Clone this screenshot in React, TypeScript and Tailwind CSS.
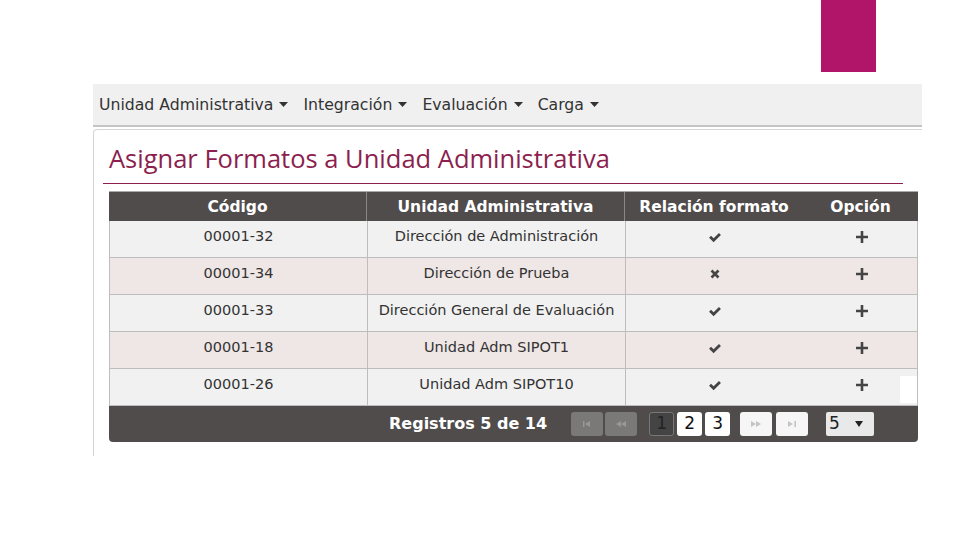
import React from 'react';

type Row = { code: string; unit: string; ok: boolean };

const rows: Row[] = [
  { code: '00001-32', unit: 'Dirección de Administración', ok: true },
  { code: '00001-34', unit: 'Dirección de Prueba', ok: false },
  { code: '00001-33', unit: 'Dirección General de Evaluación', ok: true },
  { code: '00001-18', unit: 'Unidad Adm SIPOT1', ok: true },
  { code: '00001-26', unit: 'Unidad Adm SIPOT10', ok: true },
];

const verdana = { fontFamily: '"DejaVu Sans", Verdana, sans-serif' };

function Caret() {
  return (
    <svg width="9" height="6" viewBox="0 0 9 6" className="ml-[6px] mt-[1px]">
      <path d="M0 0h9L4.5 5z" fill="#333" />
    </svg>
  );
}

function CheckIcon() {
  return (
    <svg width="14" height="11" viewBox="0 0 13 10">
      <path d="M1 5.2l1.8-1.8 2.4 2.4L10.2 0.8 12 2.6 5.2 9.4z" fill="#444" />
    </svg>
  );
}

function TimesIcon() {
  return (
    <svg width="10" height="10" viewBox="0 0 10 10">
      <path d="M1.5 1.5l7 7M8.5 1.5l-7 7" stroke="#444" strokeWidth="2.6" strokeLinecap="butt" />
    </svg>
  );
}

function PlusIcon() {
  return (
    <svg width="12" height="12" viewBox="0 0 12 12">
      <path d="M4.7 0h2.6v4.7H12v2.6H7.3V12H4.7V7.3H0V4.7h4.7z" fill="#444" />
    </svg>
  );
}

function NavGlyph({ kind, color }: { kind: 'first' | 'prev' | 'next' | 'last'; color: string }) {
  const d = {
    first: 'M1 1v6h1.4V1zM8 1L3 4l5 3z',
    prev: 'M5 1L0 4l5 3zM10 1L5 4l5 3z',
    next: 'M0 1l5 3-5 3zM5 1l5 3-5 3z',
    last: 'M1 1l5 3-5 3zM7.4 1v6H9V1z',
  }[kind];
  return (
    <svg width="10" height="8" viewBox="0 0 10 8">
      <path d={d} fill={color} />
    </svg>
  );
}

export default function App() {
  return (
    <div className="w-[960px] h-[540px] bg-white overflow-hidden relative" style={verdana}>
      {/* accent block */}
      <div className="ml-[821px] w-[55px] h-[72px] bg-[#b0156a]" />

      {/* menu bar */}
      <nav className="ml-[93px] mt-[12px] w-[829px] h-[43px] bg-[#f0f0f0] border-b-2 border-[#c4c4c4] flex items-center pl-[6px] gap-[15px] text-[15.7px] text-[#333]">
        {['Unidad Administrativa', 'Integración', 'Evaluación', 'Carga'].map((m) => (
          <div key={m} className="flex items-center">
            <span>{m}</span>
            <Caret />
          </div>
        ))}
      </nav>

      {/* content panel */}
      <div className="ml-[93px] mt-[2px] w-[829px] h-[327px] border-l border-t border-[#d4d4d4] rounded-tl-[4px]">
        <h1
          className="pl-[15px] pt-[11px] text-[25.5px] leading-[34px] text-[#8c1f4f]"
          style={{ fontFamily: '"Open Sans", "Noto Sans", sans-serif' }}
        >
          Asignar Formatos a Unidad Administrativa
        </h1>
        <div className="ml-[9px] mt-[8px] w-[800px] h-px bg-[#8c1f4f]" />

        <div className="ml-[15px] mt-[7px] w-[809px] rounded-b-[4px] overflow-hidden">
          <div className="grid grid-cols-[258px_258px_178px_115px] h-[30px] bg-[#504c4c] text-white font-bold text-[15.5px] border-t border-[#aaa]">
            <div className="flex items-center justify-center pt-[3px] border-r border-[#888]">Código</div>
            <div className="flex items-center justify-center pt-[3px] border-r border-[#888]">Unidad Administrativa</div>
            <div className="flex items-center justify-center pt-[3px]">Relación formato</div>
            <div className="flex items-center justify-center pt-[3px]">Opción</div>
          </div>
          {rows.map((r, i) => (
            <div
              key={r.code}
              className={`grid grid-cols-[258px_258px_178px_115px] h-[37px] text-[14.5px] text-[#333] border-l border-r border-b border-[#bdbdbd] ${
                i % 2 === 1 ? 'bg-[#efe6e6]' : 'bg-[#f1f1f1]'
              }`}
            >
              <div className="flex justify-center pt-[5px] border-r border-[#bdbdbd]">{r.code}</div>
              <div className="flex justify-center pt-[5px] border-r border-[#bdbdbd]">{r.unit}</div>
              <div className="flex justify-center pt-[11px]">{r.ok ? <CheckIcon /> : <TimesIcon />}</div>
              <div className="flex justify-center pt-[10px]">
                <PlusIcon />
              </div>
            </div>
          ))}
          <div className="h-[36px] bg-[#504c4c] flex items-center">
            <div className="ml-[280px] text-white font-bold text-[16px]">Registros 5 de 14</div>
            <div className="ml-[24px] flex gap-[2px]">
              <div className="w-[32px] h-[24px] rounded-[3px] bg-[#7b7878] flex items-center justify-center">
                <NavGlyph kind="first" color="#9a9797" />
              </div>
              <div className="w-[32px] h-[24px] rounded-[3px] bg-[#7b7878] flex items-center justify-center">
                <NavGlyph kind="prev" color="#9a9797" />
              </div>
            </div>
            <div className="ml-[12px] flex gap-[3px] text-[17px]">
              <div className="w-[25px] h-[24px] rounded-[3px] bg-[#444] border border-[#777] text-[#222] flex items-center justify-center">1</div>
              <div className="w-[25px] h-[24px] rounded-[3px] bg-white text-[#111] flex items-center justify-center">2</div>
              <div className="w-[25px] h-[24px] rounded-[3px] bg-white text-[#111] flex items-center justify-center">3</div>
            </div>
            <div className="ml-[10px] flex gap-[4px]">
              <div className="w-[32px] h-[24px] rounded-[3px] bg-[#f6f6f6] flex items-center justify-center">
                <NavGlyph kind="next" color="#c4c4c4" />
              </div>
              <div className="w-[32px] h-[24px] rounded-[3px] bg-[#f6f6f6] flex items-center justify-center">
                <NavGlyph kind="last" color="#c4c4c4" />
              </div>
            </div>
            <div className="ml-[18px] w-[48px] h-[24px] rounded-[2px] bg-[#e9e9e9] flex items-center pl-[3px] text-[17px] text-[#222]">
              <span>5</span>
              <svg width="8" height="8" viewBox="0 0 8 8" className="ml-[15px]">
                <path d="M0 1h8L4 7z" fill="#222" />
              </svg>
            </div>
          </div>
        </div>
      </div>

      {/* stray white patch over the table edge */}
      <div className="absolute left-[900px] top-[376px] w-[17px] h-[27px] bg-white" />
    </div>
  );
}
